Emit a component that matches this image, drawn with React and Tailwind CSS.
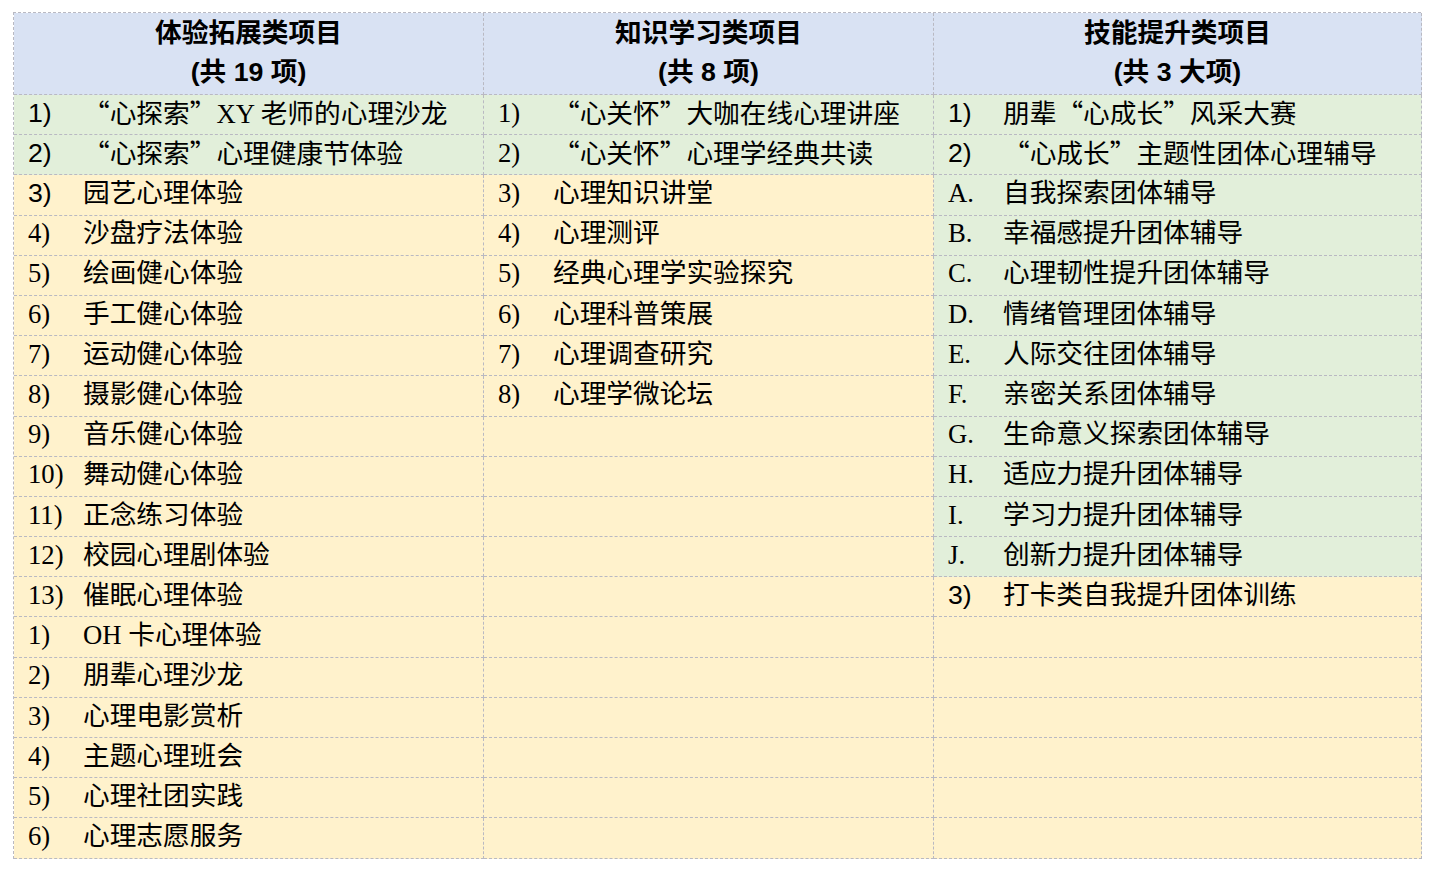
import React from "react";

const G = "g";
const Y = "y";

const col1 = [
  [G, "1)", "“心探索”XY 老师的心理沙龙", true],
  [G, "2)", "“心探索”心理健康节体验", true],
  [Y, "3)", "园艺心理体验", true],
  [Y, "4)", "沙盘疗法体验"],
  [Y, "5)", "绘画健心体验"],
  [Y, "6)", "手工健心体验"],
  [Y, "7)", "运动健心体验"],
  [Y, "8)", "摄影健心体验"],
  [Y, "9)", "音乐健心体验"],
  [Y, "10)", "舞动健心体验"],
  [Y, "11)", "正念练习体验"],
  [Y, "12)", "校园心理剧体验"],
  [Y, "13)", "催眠心理体验"],
  [Y, "1)", "OH 卡心理体验"],
  [Y, "2)", "朋辈心理沙龙"],
  [Y, "3)", "心理电影赏析"],
  [Y, "4)", "主题心理班会"],
  [Y, "5)", "心理社团实践"],
  [Y, "6)", "心理志愿服务"],
];

const col2 = [
  [G, "1)", "“心关怀”大咖在线心理讲座"],
  [G, "2)", "“心关怀”心理学经典共读"],
  [Y, "3)", "心理知识讲堂"],
  [Y, "4)", "心理测评"],
  [Y, "5)", "经典心理学实验探究"],
  [Y, "6)", "心理科普策展"],
  [Y, "7)", "心理调查研究"],
  [Y, "8)", "心理学微论坛"],
  ...Array.from({ length: 11 }, () => [Y, "", ""]),
];

const col3 = [
  [G, "1)", "朋辈“心成长”风采大赛", true],
  [G, "2)", "“心成长”主题性团体心理辅导", true],
  [G, "A.", "自我探索团体辅导"],
  [G, "B.", "幸福感提升团体辅导"],
  [G, "C.", "心理韧性提升团体辅导"],
  [G, "D.", "情绪管理团体辅导"],
  [G, "E.", "人际交往团体辅导"],
  [G, "F.", "亲密关系团体辅导"],
  [G, "G.", "生命意义探索团体辅导"],
  [G, "H.", "适应力提升团体辅导"],
  [G, "I.", "学习力提升团体辅导"],
  [G, "J.", "创新力提升团体辅导"],
  [Y, "3)", "打卡类自我提升团体训练", true],
  ...Array.from({ length: 6 }, () => [Y, "", ""]),
];

const headers = [
  ["体验拓展类项目", "(共 19 项)"],
  ["知识学习类项目", "(共 8 项)"],
  ["技能提升类项目", "(共 3 大项)"],
];

function RichText({ text }) {
  const parts = text.split(/([“”])/);
  return parts.map((p, i) =>
    p === "“" || p === "”" ? (
      <span key={i} className="[font-family:'Noto_Sans_CJK_SC',sans-serif]">
        {p}
      </span>
    ) : (
      <span key={i}>{p}</span>
    )
  );
}

function Cell({ row }) {
  const [c, num, text, sansNum] = row;
  const bg = c === G ? "bg-[#e2efda]" : "bg-[#fff2cc]";
  return (
    <div
      className={`${bg} border-r border-b border-dashed border-[#b9b9c2] flex items-center pl-[14px] pb-[3px] text-black text-[26.7px] leading-none whitespace-nowrap`}
    >
      <span
        className={`w-[55px] shrink-0 ${
          sansNum
            ? "[font-family:'Liberation_Sans',Arial,sans-serif]"
            : "[font-family:'Liberation_Serif','Times_New_Roman',serif]"
        }`}
      >
        {num}
      </span>
      <span className="[font-family:'Liberation_Serif','Noto_Sans_CJK_SC',serif]">
        <RichText text={text} />
      </span>
    </div>
  );
}

export default function App() {
  const rows = [];
  for (let i = 0; i < 19; i++) {
    rows.push(<Cell key={`a${i}`} row={col1[i]} />);
    rows.push(<Cell key={`b${i}`} row={col2[i]} />);
    rows.push(<Cell key={`c${i}`} row={col3[i]} />);
  }
  return (
    <div className="w-[1448px] h-[870px] bg-white pt-[12px] pl-[13px]">
      <div className="grid grid-cols-[470px_450px_488px] grid-rows-[82px_repeat(19,40.2px)] w-[1408px] border-l border-t border-dashed border-[#b9b9c2]">
        {headers.map(([a, b], i) => (
          <div
            key={i}
            className="bg-[#d9e2f3] border-r border-b border-dashed border-[#b9b9c2] flex flex-col items-center justify-center pb-[2px] text-black font-bold text-[26.7px] leading-[39px] [font-family:'Liberation_Sans','Noto_Sans_CJK_SC',sans-serif]"
          >
            <div>{a}</div>
            <div>{b}</div>
          </div>
        ))}
        {rows}
      </div>
    </div>
  );
}
